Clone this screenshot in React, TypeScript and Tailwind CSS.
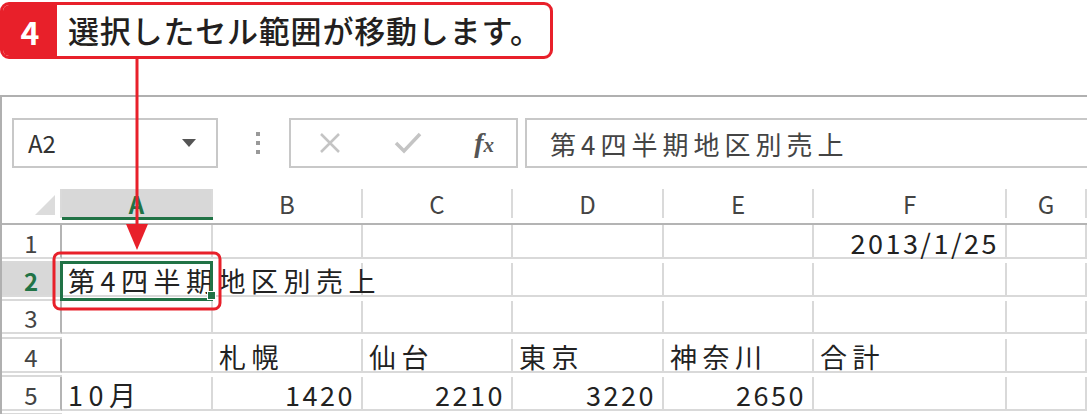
import React from 'react';

const RED = '#e8202a';
const jp = { fontFamily: '"Noto Sans CJK JP", "Noto Sans", sans-serif' };

const cols = ['A', 'B', 'C', 'D', 'E', 'F', 'G'];

type Cell = { text?: string; right?: boolean };

const rows: Cell[][] = [
  [{}, {}, {}, {}, {}, { text: '2013/1/25', right: true }, {}],
  [{ text: '第4四半期地区別売上' }, {}, {}, {}, {}, {}, {}],
  [{}, {}, {}, {}, {}, {}, {}],
  [{}, { text: '札幌' }, { text: '仙台' }, { text: '東京' }, { text: '神奈川' }, { text: '合計' }, {}],
  [
    { text: '10月' },
    { text: '1420', right: true },
    { text: '2210', right: true },
    { text: '3220', right: true },
    { text: '2650', right: true },
    {},
    {},
  ],
];

function Callout() {
  return (
    <div className="mt-[2px] flex h-[57px] w-[553px] overflow-hidden rounded-[9px] border-[3px] border-[#e8202a]">
      <div className="flex w-[54px] items-center justify-center bg-[#e8202a] text-[32px] font-bold text-white" style={jp}>
        4
      </div>
      <div className="flex items-center pl-[11px] text-[31px] font-medium tracking-[0.8px] text-[#231f20]" style={jp}>
        選択したセル範囲が移動します。
      </div>
    </div>
  );
}

function FormulaBar() {
  return (
    <div className="flex h-[92px] items-center pl-[10px]">
      <div className="flex h-[50px] w-[206px] items-center justify-between border-2 border-[#c8c8c8] pl-[14px] pr-[20px]">
        <span className="text-[24px] text-[#333]" style={jp}>A2</span>
        <svg width="14" height="8" viewBox="0 0 14 8">
          <path d="M0 0 L14 0 L7 8 Z" fill="#555" />
        </svg>
      </div>
      <div className="ml-[38px] mr-[29px] flex flex-col gap-[5px]">
        <span className="h-[4px] w-[4px] bg-[#999]" />
        <span className="h-[4px] w-[4px] bg-[#999]" />
        <span className="h-[4px] w-[4px] bg-[#999]" />
      </div>
      <div className="flex h-[50px] w-[229px] items-center justify-between border-2 border-[#c8c8c8] pl-[27px] pr-[22px]">
        <svg width="24" height="24" viewBox="0 0 24 24">
          <path d="M3 3 L21 21 M21 3 L3 21" stroke="#c4c4c4" strokeWidth="2.5" />
        </svg>
        <svg width="28" height="22" viewBox="0 0 28 22">
          <path d="M2 11 L10 19 L26 2" stroke="#c4c4c4" strokeWidth="3.5" fill="none" />
        </svg>
        <span className="text-[28px] font-bold italic leading-none text-[#555]" style={{ fontFamily: '"Liberation Serif", serif' }}>
          f<span className="text-[21px]">x</span>
        </span>
      </div>
      <div className="ml-[7px] flex h-[50px] flex-1 items-center border-2 border-r-0 border-[#c8c8c8] pl-[23px]">
        <span className="text-[26px] tracking-[5px] text-[#444]" style={jp}>第4四半期地区別売上</span>
      </div>
    </div>
  );
}

function Sheet() {
  const grid = 'grid grid-cols-[60px_151px_150px_150px_151px_150px_193px_1fr]';
  return (
    <div>
      <div className={`${grid} h-[36px] border-b-2 border-[#b4b4b4]`}>
        <div className="relative border-r-2 border-[#dadada]">
          <svg className="absolute bottom-[3px] right-[5px]" width="20" height="20" viewBox="0 0 20 20">
            <path d="M20 0 L20 20 L0 20 Z" fill="#dcdcdc" />
          </svg>
        </div>
        {cols.map((c) => (
          <div
            key={c}
            className={`relative flex items-center justify-center border-r-2 border-[#dadada] text-[24px] leading-none ${
              c === 'A' ? 'bg-[#d8d8d8] text-[#217346] font-bold' : 'text-[#444]'
            }`}
            style={jp}
          >
            {c}
            {c === 'A' && <div className="absolute -bottom-[2px] left-0 right-[-2px] h-[3px] bg-[#217346]" />}
          </div>
        ))}
        <div />
      </div>
      {rows.map((r, i) => (
        <div key={i} className={`${grid} h-[38px]`}>
          <div
            className={`flex items-center justify-center border-r-2 border-b-2 border-r-[#b4b4b4] border-b-[#dadada] pt-[3px] text-[24px] leading-none ${
              i === 1 ? 'bg-[#d8d8d8] font-bold text-[#217346]' : 'text-[#444]'
            }`}
            style={jp}
          >
            {i + 1}
          </div>
          {r.map((cell, j) => (
            <div
              key={j}
              className={`relative flex items-center whitespace-nowrap border-r-2 border-b-2 border-[#d9d9d9] pt-[3px] text-[27px] leading-none text-[#222] ${
                cell.right ? 'justify-end pr-[6px]' : 'pl-[6px]'
              } ${i === 1 && j === 0 ? 'z-10' : ''}`}
              style={jp}
            >
              <span className={cell.right ? 'tracking-[2.5px]' : 'tracking-[5.5px]'}>{cell.text}</span>
              {i === 1 && j === 0 && (
                <>
                  <div className="pointer-events-none absolute -left-[2px] -top-[2px] h-[40px] w-[153px] border-[3px] border-[#217346]" />
                  <div className="absolute -bottom-[5px] -right-[5px] h-[9px] w-[9px] border border-white bg-[#217346]" />
                </>
              )}
            </div>
          ))}
          <div className="border-b-2 border-[#d9d9d9]" />
        </div>
      ))}
    </div>
  );
}

export default function App() {
  return (
    <div className="relative h-[414px] w-[1087px] overflow-hidden bg-white">
      <Callout />
      <div className="mt-[36px] border-l-2 border-t-2 border-[#b0b0b0] bg-white">
        <FormulaBar />
        <Sheet />
      </div>
      {/* arrow and highlight ring sit over the sheet */}
      <svg className="pointer-events-none absolute left-0 top-0 z-20" width="1087" height="414">
        <line x1="137" y1="59" x2="137" y2="228" stroke={RED} strokeWidth="3" />
        <path d="M126 224 L148 224 L137 250 Z" fill={RED} />
        <rect x="54" y="253" width="166" height="56" rx="6" fill="none" stroke={RED} strokeWidth="3" />
      </svg>
    </div>
  );
}
